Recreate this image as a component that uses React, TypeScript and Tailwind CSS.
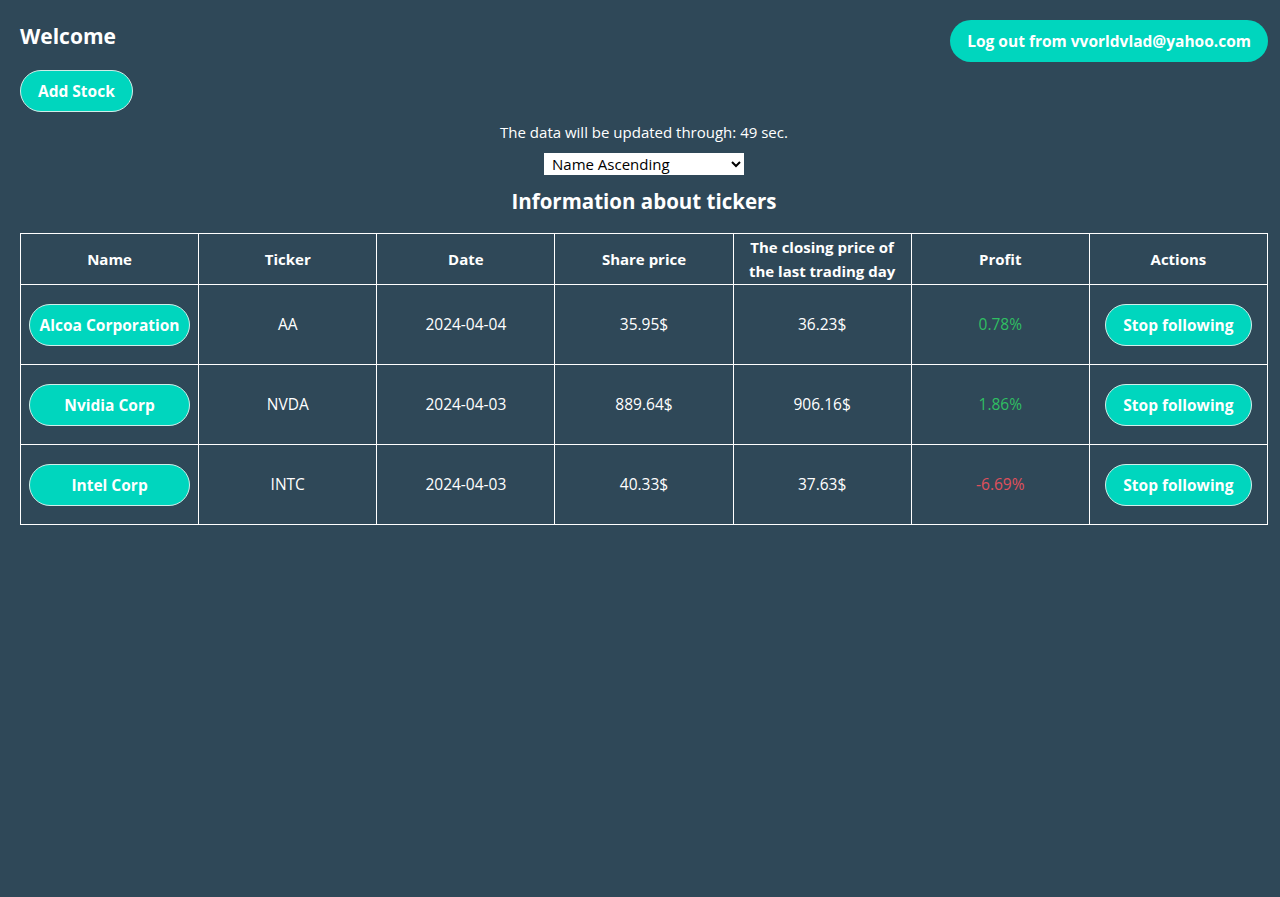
import { useState } from "react";

type Stock = {
  name: string;
  ticker: string;
  date: string;
  price: string;
  close: string;
  profit: number;
};

const stocks: Stock[] = [
  { name: "Alcoa Corporation", ticker: "AA", date: "2024-04-04", price: "35.95$", close: "36.23$", profit: 0.78 },
  { name: "Nvidia Corp", ticker: "NVDA", date: "2024-04-03", price: "889.64$", close: "906.16$", profit: 1.86 },
  { name: "Intel Corp", ticker: "INTC", date: "2024-04-03", price: "40.33$", close: "37.63$", profit: -6.69 },
];

const headers = [
  "Name",
  "Ticker",
  "Date",
  "Share price",
  "The closing price of the last trading day",
  "Profit",
  "Actions",
];

const btn =
  "rounded-full bg-[#00d6be] border border-[#cfeee9] text-white font-bold text-[15.5px] leading-[22px] py-[9px] cursor-pointer";

export default function App() {
  const [sort, setSort] = useState("name-asc");

  return (
    <div className="min-h-[897px] bg-[#2f4858] text-white pl-5 pr-3 pt-5 font-['Open_Sans',sans-serif]">
      {/* Header */}
      <div className="flex items-start justify-between">
        <div className="flex flex-col items-start">
          <h2 className="text-[21px] leading-[33px] font-bold">Welcome</h2>
          <button className={`${btn} mt-[17px] px-[17px]`}>Add Stock</button>
        </div>
        <button className="rounded-full bg-[#00d6be] text-white font-bold text-[15.5px] leading-[22px] py-[10px] px-[17px]">
          Log out from vvorldvlad@yahoo.com
        </button>
      </div>

      <div className="flex flex-col items-center">
        <p className="mt-2 text-[15px] leading-6">The data will be updated through: 49 sec.</p>
        <select
          value={sort}
          onChange={(e) => setSort(e.target.value)}
          className="mt-[9px] w-[200px] h-[22px] bg-white text-black text-[15px] px-1"
        >
          <option value="name-asc">Name Ascending</option>
          <option value="name-desc">Name Descending</option>
          <option value="profit-asc">Profit Ascending</option>
          <option value="profit-desc">Profit Descending</option>
        </select>
        <h3 className="mt-3 text-[20.5px] leading-7 font-bold">Information about tickers</h3>
      </div>

      {/* Table */}
      <table className="mt-[18px] w-full table-fixed border-collapse text-[15.5px]">
        <thead>
          <tr className="h-[51px]">
            {headers.map((h) => (
              <th key={h} className="border border-white font-bold text-[15px] px-3 leading-6 text-center">
                {h}
              </th>
            ))}
          </tr>
        </thead>
        <tbody>
          {stocks.map((s) => (
            <tr key={s.ticker} className="h-[80px]">
              <td className="border border-white text-center px-2">
                <button className={`${btn} w-[161px]`}>{s.name}</button>
              </td>
              <td className="border border-white text-center">{s.ticker}</td>
              <td className="border border-white text-center">{s.date}</td>
              <td className="border border-white text-center">{s.price}</td>
              <td className="border border-white text-center">{s.close}</td>
              <td
                className={`border border-white text-center ${
                  s.profit >= 0 ? "text-[#2fbf62]" : "text-[#e0505c]"
                }`}
              >
                {s.profit.toFixed(2)}%
              </td>
              <td className="border border-white text-center">
                <button className={`${btn} px-[17px]`}>Stop following</button>
              </td>
            </tr>
          ))}
        </tbody>
      </table>
    </div>
  );
}
